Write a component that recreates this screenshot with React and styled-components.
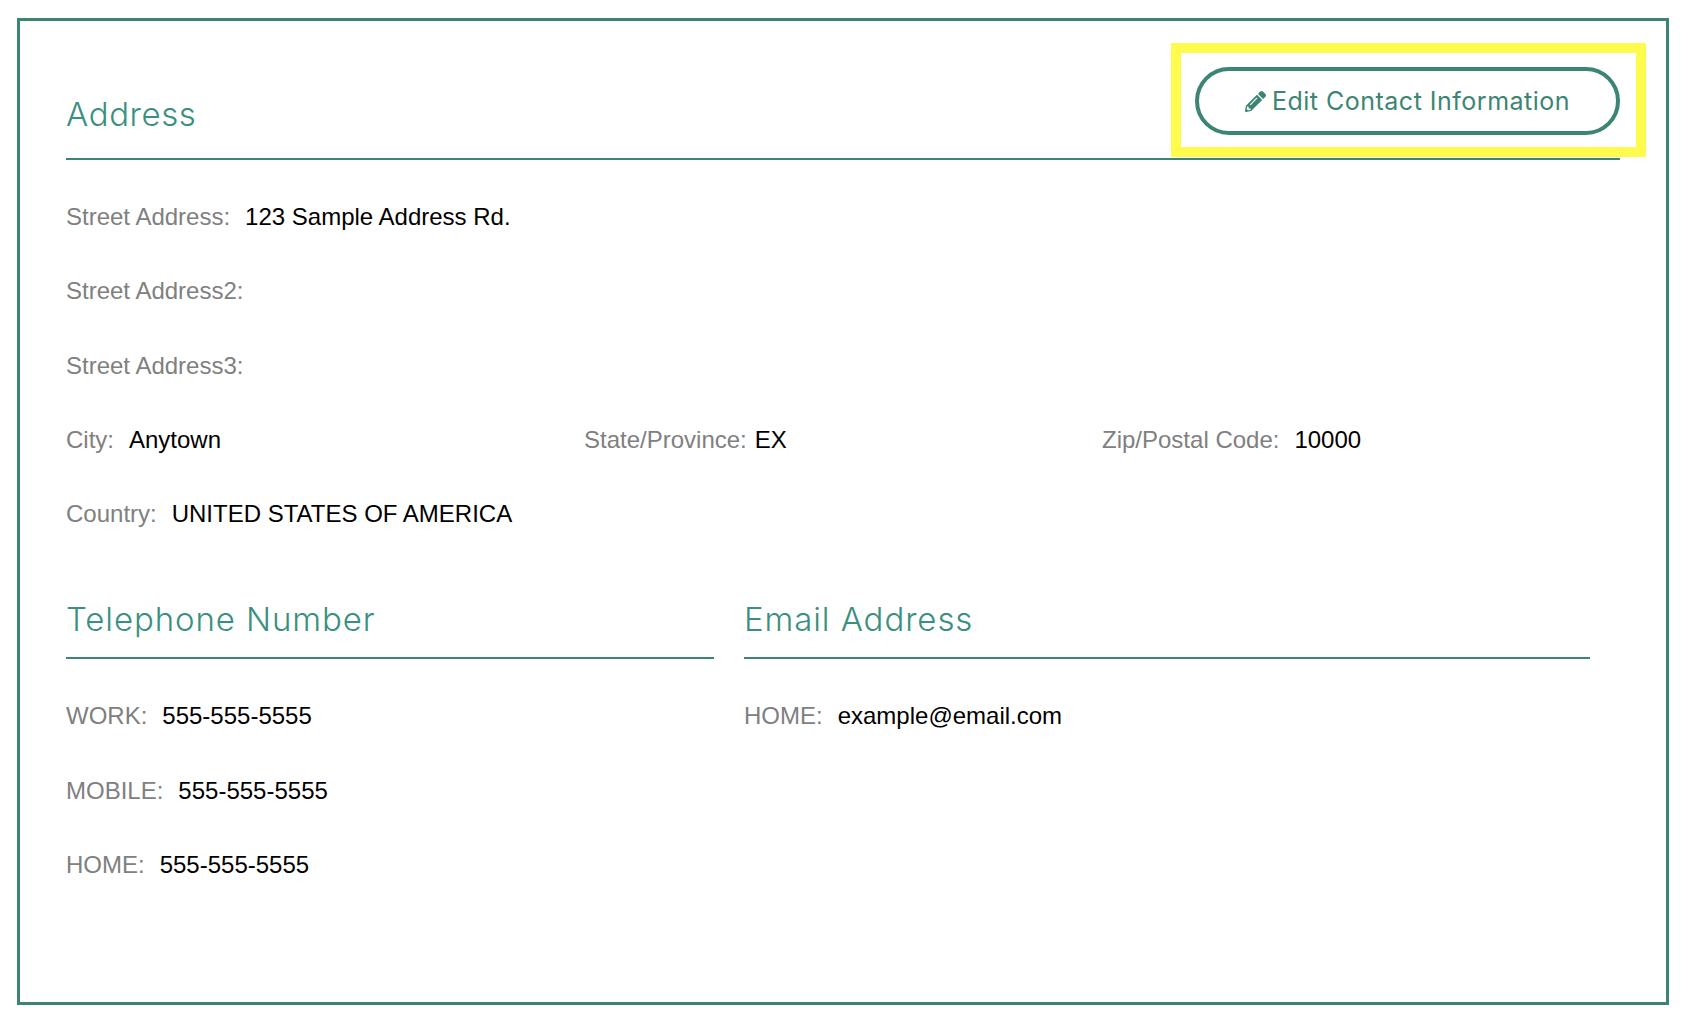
import React from "react";
import styled, { createGlobalStyle } from "styled-components";
import { FaPencilAlt } from "react-icons/fa";

const Global = createGlobalStyle`
  html, body {
    margin: 0;
    padding: 0;
    background: #fff;
  }
  * {
    box-sizing: border-box;
  }
`;

const Card = styled.section`
  width: 1652px;
  height: 987px;
  margin: 18px 0 0 17px;
  padding: 0 46px;
  border: 3px solid #3c8574;
  font-family: "Liberation Sans", Arial, sans-serif;
  font-size: 24px;
`;

const Header = styled.div`
  height: 139px;
  display: flex;
  justify-content: space-between;
  align-items: flex-start;
  border-bottom: 2px solid #3c8574;
`;

const Heading = styled.h2`
  margin: 0;
  font-family: Inter, "Open Sans", sans-serif;
  font-size: 33px;
  font-weight: 300;
  line-height: 40px;
  letter-spacing: 0.9px;
  color: #3a9080;
`;

const AddressHeading = styled(Heading)`
  margin-top: 73px;
  letter-spacing: 0.6px;
`;

const EditButton = styled.button`
  position: relative;
  width: 425px;
  height: 68px;
  margin-top: 46px;
  display: flex;
  align-items: center;
  justify-content: center;
  gap: 6px;
  padding: 0;
  background: #fff;
  border: 4px solid #3c8574;
  border-radius: 34px;
  color: #3c8574;
  font-family: Inter, "Open Sans", sans-serif;
  font-size: 25px;
  font-weight: 400;
  letter-spacing: 0.5px;

  svg {
    width: 21px;
    height: 21px;
  }

  /* the yellow annotation drawn round the button */
  &::after {
    content: "";
    position: absolute;
    top: -28px;
    left: -28px;
    right: -30px;
    bottom: -26px;
    border: 10px solid #fffb4d;
  }
`;

const Rows = styled.div`
  display: flex;
  flex-direction: column;
  padding-top: 39px;
`;

const Row = styled.div`
  height: 74.3px;
  display: flex;
  align-items: flex-start;
  line-height: 36px;
`;

const ThreeCols = styled(Row)`
  display: grid;
  grid-template-columns: repeat(3, 518px);
`;

const Field = styled.div`
  display: flex;
  gap: ${(props) => props.$gap || 15}px;
  white-space: nowrap;
`;

const Label = styled.span`
  color: #808080;
`;

const Value = styled.span`
  color: #000;
`;

const Contacts = styled.div`
  display: grid;
  grid-template-columns: 648px 846px;
  column-gap: 30px;
`;

const ContactHeader = styled.div`
  height: 89px;
  padding-top: 29px;
  border-bottom: 2px solid #3c8574;
`;

const ContactRows = styled(Rows)`
  padding-top: 39px;
`;

function Item({ label, value, gap }) {
  return (
    <Field $gap={gap}>
      <Label>{label}</Label>
      {value && <Value>{value}</Value>}
    </Field>
  );
}

export default function App() {
  return (
    <>
      <Global />
      <Card>
        <Header>
          <AddressHeading>Address</AddressHeading>
          <EditButton>
            <FaPencilAlt />
            Edit Contact Information
          </EditButton>
        </Header>
        <Rows>
          <Row><Item label="Street Address:" value="123 Sample Address Rd." /></Row>
          <Row><Item label="Street Address2:" /></Row>
          <Row><Item label="Street Address3:" /></Row>
          <ThreeCols>
            <Item label="City:" value="Anytown" />
            <Item label="State/Province:" value="EX" gap={8} />
            <Item label="Zip/Postal Code:" value="10000" />
          </ThreeCols>
          <Row><Item label="Country:" value="UNITED STATES OF AMERICA" /></Row>
        </Rows>
        <Contacts>
          <div>
            <ContactHeader><Heading>Telephone Number</Heading></ContactHeader>
            <ContactRows>
              <Row><Item label="WORK:" value="555-555-5555" /></Row>
              <Row><Item label="MOBILE:" value="555-555-5555" /></Row>
              <Row><Item label="HOME:" value="555-555-5555" /></Row>
            </ContactRows>
          </div>
          <div>
            <ContactHeader><Heading>Email Address</Heading></ContactHeader>
            <ContactRows>
              <Row><Item label="HOME:" value="example@email.com" /></Row>
            </ContactRows>
          </div>
        </Contacts>
      </Card>
    </>
  );
}
